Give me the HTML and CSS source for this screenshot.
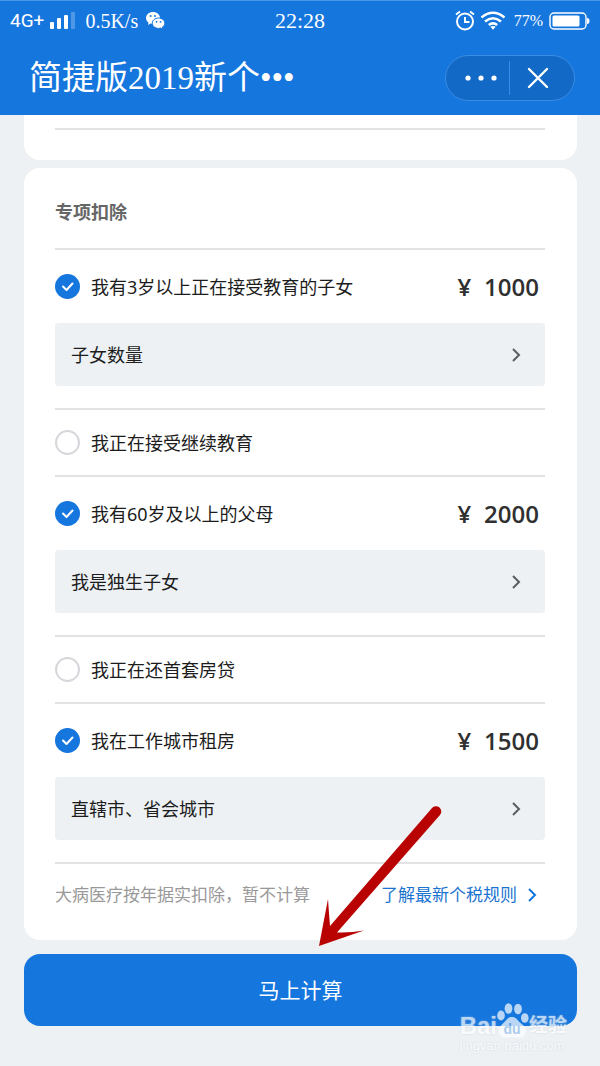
FILE: index.html
```html
<!DOCTYPE html>
<html lang="zh-CN">
<head>
<meta charset="utf-8">
<meta name="viewport" content="width=device-width, initial-scale=1">
<title>简捷版2019新个税计算</title>
<link rel="stylesheet" href="styles.css">
</head>
<body>
<div class="page">
  <header class="header">
    <div class="status">
      <div class="status-side">
        <span class="network">4G+</span>
        <svg class="signal" width="27" height="18" viewBox="0 0 27 18" fill="#fff" aria-hidden="true">
          <rect x="1" y="10" width="4" height="7" rx="1"/><rect x="8" y="6" width="4" height="11" rx="1"/><rect x="15" y="3" width="4" height="14" rx="1"/><rect x="22" y="0" width="4" height="17" rx="1" opacity=".25"/>
        </svg>
        <span class="speed">0.5K/s</span>
        <svg class="wechat" width="19" height="18" viewBox="0 0 19 18" aria-hidden="true">
          <path fill="#fff" d="M7 0C3 0 0 2.700 0 6c0 1.900 1 3.500 2.500 4.600L2 13l2.600-1.400c.8.2 1.600.4 2.400.4 4 0 7-2.700 7-6S11 0 7 0z"/>
          <path fill="#fff" stroke="#1576de" stroke-width="1" d="M12.500 6C9 6 6.300 8.300 6.300 11.200s2.700 5.200 6.200 5.200c.8 0 1.500-.1 2.200-.4l2.200 1.300-.5-2.200c1.500-1 2.400-2.400 2.400-3.900C18.800 8.300 16 6 12.500 6z"/>
          <g fill="#1576de"><circle cx="4.600" cy="4" r="1"/><circle cx="9" cy="4" r="1"/><circle cx="10.500" cy="9.800" r=".9"/><circle cx="14.600" cy="9.800" r=".9"/></g>
        </svg>
      </div>
      <time class="clock">22:28</time>
      <div class="status-side status-right">
        <svg width="20" height="21" viewBox="0 0 20 21" fill="none" stroke="#fff" stroke-width="2" aria-hidden="true">
          <circle cx="10" cy="11.500" r="8"/><path d="M10 7v5h4.500M1 4.500 5 1.500M19 4.500l-4-3"/>
        </svg>
        <svg class="wifi" width="26" height="19" viewBox="0 0 26 19" fill="none" stroke="#fff" stroke-width="2.500" aria-hidden="true">
          <path d="M1.500 6.500Q13-3 24.500 6.500M5 10.500q8-6.500 16 0M8.800 14q4.200-3.300 8.400 0"/><path fill="#fff" stroke="none" d="M10.300 15.800q2.700-1.800 5.400 0L13 18.800z"/>
        </svg>
        <span class="percent">77%</span>
        <svg width="41" height="18" viewBox="0 0 41 18" aria-hidden="true">
          <rect x="1" y="1" width="36" height="16" rx="4" fill="none" stroke="#fff" stroke-width="1.400"/><rect x="3.500" y="3.500" width="27" height="11" rx="1.500" fill="#fff"/><path fill="#fff" d="M38 6q2.500 0 2.500 3T38 12z"/>
        </svg>
      </div>
    </div>
    <div class="nav">
      <h1 class="nav-title">简捷版2019新个•••</h1>
      <div class="capsule">
        <button class="capsule-button" type="button" aria-label="更多">
          <svg width="32" height="6" viewBox="0 0 32 6" fill="#fff"><circle cx="3" cy="3" r="2.600"/><circle cx="16" cy="3" r="2.600"/><circle cx="29" cy="3" r="2.600"/></svg>
        </button>
        <button class="capsule-button capsule-close" type="button" aria-label="关闭">
          <svg width="22" height="22" viewBox="0 0 22 22" fill="none" stroke="#fff" stroke-width="2.400" stroke-linecap="round"><path d="M2 2l18 18M20 2 2 20"/></svg>
        </button>
      </div>
    </div>
  </header>

  <main class="content">
    <section class="card card-previous"><hr class="line"></section>

    <section class="card">
      <h2 class="card-title">专项扣除</h2>

      <div class="item">
        <div class="row row-open">
          <label class="choice"><input class="tick" type="checkbox" checked>我有3岁以上正在接受教育的子女</label>
          <span class="amount"><span>¥</span><span>1000</span></span>
        </div>
        <button class="picker" type="button">子女数量<svg class="chevron" viewBox="0 0 10 16"><path d="M2 2l6 6-6 6"/></svg></button>
      </div>

      <div class="item">
        <div class="row"><label class="choice"><input class="tick" type="checkbox">我正在接受继续教育</label></div>
      </div>

      <div class="item">
        <div class="row row-open">
          <label class="choice"><input class="tick" type="checkbox" checked>我有60岁及以上的父母</label>
          <span class="amount"><span>¥</span><span>2000</span></span>
        </div>
        <button class="picker" type="button">我是独生子女<svg class="chevron" viewBox="0 0 10 16"><path d="M2 2l6 6-6 6"/></svg></button>
      </div>

      <div class="item">
        <div class="row"><label class="choice"><input class="tick" type="checkbox">我正在还首套房贷</label></div>
      </div>

      <div class="item">
        <div class="row row-open">
          <label class="choice"><input class="tick" type="checkbox" checked>我在工作城市租房</label>
          <span class="amount"><span>¥</span><span>1500</span></span>
        </div>
        <button class="picker" type="button">直辖市、省会城市<svg class="chevron" viewBox="0 0 10 16"><path d="M2 2l6 6-6 6"/></svg></button>
      </div>

      <div class="item notes">
        <span class="note">大病医疗按年据实扣除，暂不计算</span>
        <a class="rules" href="#">了解最新个税规则<svg class="chevron" viewBox="0 0 10 16"><path d="M2 2l6 6-6 6"/></svg></a>
      </div>

      <svg class="arrow" width="136" height="150" viewBox="312 800 136 150" aria-hidden="true">
        <path fill="#b90303" d="M319 946 328 899Q329 914 330 926L432 808A5 5 0 0 1 440 815L337 932.500Q351 933 364 930.500Q345 937 319 946z"/>
      </svg>
    </section>

    <button class="submit" type="button">马上计算</button>
  </main>

  <div class="watermark">
    <div class="brand">
      <span class="brand-latin">Bai</span>
      <svg width="32" height="35" viewBox="0 0 32 35" aria-hidden="true">
        <g fill="#fff"><ellipse cx="4" cy="12.500" rx="3.800" ry="5"/><ellipse cx="11.500" cy="5.500" rx="3.900" ry="5.200"/><ellipse cx="21" cy="6" rx="3.900" ry="5.200"/><ellipse cx="27.800" cy="15" rx="3.800" ry="4.800"/><path d="M15 14c4 0 5 2.500 8 5.500 4 3 6 5 5.500 9.500-.5 4-3 6-7.500 5.500-3.500-.5-7-.5-10.500 0-5 .5-8-1.500-8.500-5.500-.4-4 1.500-6.500 5-9.500 3-3 4-5.500 8-5.500z"/></g>
        <text class="brand-du" x="15" y="31" text-anchor="middle">du</text>
      </svg>
      <span class="brand-han">经验</span>
    </div>
    <div class="site">jingyan.baidu.com</div>
  </div>
</div>
</body>
</html>
```
FILE: styles.css
```css
* { box-sizing: border-box; }

body {
  margin: 0;
  background: #edf1f4;
  color: #1c1c1c;
  font-family: "Noto Sans", "Noto Sans CJK SC", sans-serif;
  font-size: 18px;
  line-height: 24px;
}

button {
  border: 0;
  padding: 0;
  background: none;
  color: inherit;
  font: inherit;
}

svg { display: block; flex: none; }

.page {
  position: relative;
  min-height: 100vh;
}

.header {
  border-top: 1px solid #4a96e8;
  background: #1576de;
  color: #fff;
}

.status {
  display: grid;
  grid-template-columns: 1fr auto 1fr;
  align-items: center;
  height: 39px;
  padding: 0 10px;
  font-family: "Liberation Serif", serif;
}

.status-side { display: flex; align-items: center; }
.status-right { justify-content: flex-end; }

.network {
  font-family: Roboto, sans-serif;
  font-size: 19px;
}

.signal { margin: 0 9px 0 5px; }
.speed { font-size: 20px; }
.wechat { margin-left: 8px; }
.clock { font-size: 22px; }
.wifi { margin: 0 8px 0 5px; }
.percent { margin-right: 6px; font-size: 16px; }

.nav {
  display: flex;
  align-items: center;
  justify-content: space-between;
  height: 75px;
  padding: 0 25px 0 29px;
}

.nav-title {
  margin: 0;
  font: 400 33px/40px "Liberation Serif", "Noto Sans CJK SC", serif;
  white-space: nowrap;
}

.capsule {
  display: flex;
  align-items: center;
  width: 130px;
  height: 46px;
  border: 1px solid #3b8ce3;
  border-radius: 23px;
  background: #1369c6;
}

.capsule-button {
  display: flex;
  flex: 1;
  align-items: center;
  justify-content: center;
  height: 34px;
  padding-left: 7px;
}

.capsule-close {
  border-left: 1px solid #3b8ce3;
  padding: 0 8px 0 0;
}

.content { padding: 0 23px 40px 24px; }

.card {
  position: relative;
  border-radius: 16px;
  padding: 0 32px 14px 31px;
  background: #fff;
}

.card-previous {
  margin-bottom: 8px;
  border-radius: 0 0 16px 16px;
  padding-top: 13px;
  padding-bottom: 30px;
}

.line {
  margin: 0;
  border: 0;
  border-top: 2px solid #e0e2e4;
}

.card-title {
  margin: 0;
  padding: 32px 0 24px;
  color: #666;
  font-size: 18px;
  font-weight: 700;
  line-height: 24px;
}

.item { border-top: 2px solid #e0e2e4; }

.row {
  display: flex;
  align-items: center;
  justify-content: space-between;
  height: 65px;
}

.row-open { height: 73px; }

.choice {
  display: flex;
  align-items: center;
  gap: 11px;
}

.tick {
  width: 25px;
  height: 25px;
  margin: 0;
  border: 2px solid #d5d7da;
  border-radius: 50%;
  appearance: none;
  background: #fff;
}

.tick:checked {
  border: 0;
  background: #1576de url("data:image/svg+xml,%3Csvg xmlns='http://www.w3.org/2000/svg' viewBox='0 0 25 25'%3E%3Cpath d='M8 12.500l3.500 3.500 6-6.500' fill='none' stroke='white' stroke-width='2' stroke-linecap='round' stroke-linejoin='round'/%3E%3C/svg%3E") center / 25px 25px;
}

.amount {
  display: flex;
  gap: 13px;
  padding-right: 6px;
  color: #303030;
  font-family: "Open Sans", "Noto Sans", sans-serif;
  font-size: 24px;
  font-weight: 600;
  line-height: 32px;
}

.picker {
  display: flex;
  align-items: center;
  justify-content: space-between;
  width: 100%;
  height: 63px;
  margin-bottom: 22px;
  border-radius: 4px;
  padding: 0 24px 0 16px;
  background: #edf1f4;
}

.chevron {
  width: 10px;
  height: 16px;
  fill: none;
  stroke: #5a5e62;
  stroke-width: 2;
}

.notes {
  display: flex;
  align-items: center;
  justify-content: space-between;
  height: 64px;
  padding-right: 8px;
  font-size: 17px;
  white-space: nowrap;
}

.note { color: #999; }

.rules {
  display: flex;
  align-items: center;
  gap: 10px;
  color: #1a73cf;
  text-decoration: none;
}

.rules .chevron { stroke: #1576de; }

.arrow {
  position: absolute;
  right: 129px;
  bottom: -10px;
}

.submit {
  width: 100%;
  height: 72px;
  margin-top: 14px;
  border-radius: 16px;
  background: #1576de;
  color: #fff;
  font-size: 21px;
}

.watermark {
  position: absolute;
  right: 33px;
  bottom: 12px;
  color: #fff;
  font-family: "Liberation Sans", "Noto Sans CJK SC", sans-serif;
  opacity: .7;
}

.brand {
  display: flex;
  align-items: flex-end;
  height: 36px;
  text-shadow: 0 0 2px #c3cdd6;
}

.brand-latin { font-size: 24px; font-weight: 700; }
.brand-han { font-size: 19px; font-weight: 700; }

.brand-du {
  fill: #8fbbe8;
  font-size: 14px;
  font-weight: 700;
  text-shadow: none;
}

.site {
  font-size: 13px;
  line-height: 16px;
  text-shadow: 0 0 2px #c3cdd6;
}
```
